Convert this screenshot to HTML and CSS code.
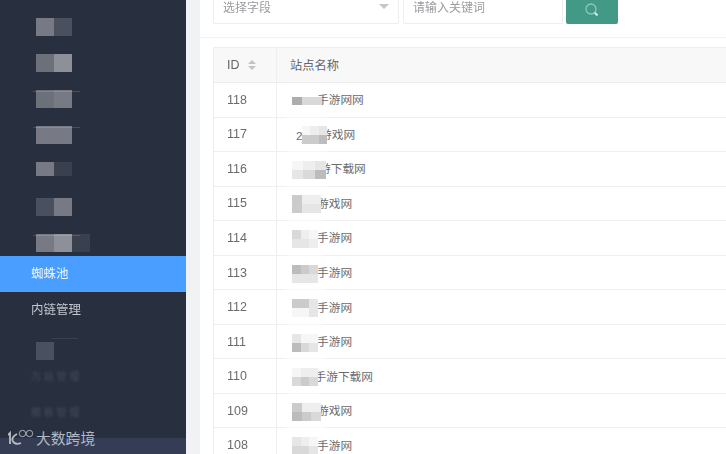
FILE: index.html
```html
<!DOCTYPE html>
<html lang="zh">
<head>
<meta charset="utf-8">
<title>蜘蛛池</title>
<link rel="stylesheet" href="styles.css">
</head>
<body>
<div class="app">
  <aside class="sidebar">
    <ul class="menu">
      <li class="item"><span class="mosaic"><i class="g1"></i><i class="g3"></i></span></li>
      <li class="item"><span class="mosaic"><i class="g2"></i><i class="g0"></i></span></li>
      <li class="item"><span class="mosaic streak"><i class="g2"></i><i class="g1"></i></span></li>
      <li class="item"><span class="mosaic streak"><i class="g1"></i><i class="g1"></i></span></li>
      <li class="item"><span class="mosaic short"><i class="g1"></i><i class="g4"></i></span></li>
      <li class="item"><span class="mosaic"><i class="g3"></i><i class="g1"></i></span></li>
      <li class="item"><span class="mosaic streak"><i class="g1"></i><i class="g0"></i><i class="g4"></i></span></li>
      <li class="item active"><span class="label">蜘蛛池</span></li>
      <li class="item"><span class="label">内链管理</span></li>
      <li class="item"><span class="mosaic streak dim"><i class="g3"></i></span></li>
      <li class="item faint"><span class="label">万 站 管 理</span></li>
      <li class="item faint"><span class="label">模 板 管 理</span></li>
    </ul>
    <div class="footer-bar"></div>
    <div class="watermark">
      <svg class="wm-logo" viewBox="0 0 28 18" width="28" height="18" aria-hidden="true">
        <path d="M0 6 2 4V15" fill="none" stroke="#b9bdc5" stroke-width="1.8"/>
        <path d="M9 5Q3.5 8 4.5 11.5 6.500 16.500 13 14" fill="none" stroke="#b9bdc5" stroke-width="1.8"/>
        <circle cx="14.500" cy="4.500" r="3.200" fill="none" stroke="#b9bdc5" stroke-width="0.900"/>
        <circle cx="21.500" cy="4.500" r="3.200" fill="none" stroke="#b9bdc5" stroke-width="0.900"/>
      </svg>
      <span class="wm-text">大数跨境</span>
    </div>
  </aside>
  <div class="gutter"></div>
  <main class="content">
    <div class="filters">
      <div class="select"><span>选择字段</span><b class="caret"></b></div>
      <div class="input">请输入关键词</div>
      <div class="btn">
        <svg viewBox="0 0 16 16" width="16" height="16" aria-hidden="true">
          <circle cx="7" cy="7" r="5" fill="none" stroke="#8fc7b8" stroke-width="1.300"/>
          <path d="M10.800 10.800 13.500 13.500" stroke="#d8ece6" stroke-width="2"/>
        </svg>
      </div>
    </div>
    <div class="table">
      <div class="row head">
        <div class="c-id">ID<span class="sort"><b class="up"></b><b class="down"></b></span></div>
        <div class="c-name">站点名称</div>
      </div>
      <div class="row"><div class="c-id">118</div><div class="c-name"><span class="blur t25"><span class="cells thin wide30"><i class="c6"></i><i class="c3"></i><i class="c3"></i></span></span>手游网网</div></div>
      <div class="row"><div class="c-id">117</div><div class="c-name"><span class="blur t28"><span class="two">2</span><span class="cells wide25"><i class="c0"></i><i class="c1"></i><i class="c2"></i><i class="c4"></i><i class="c4"></i><i class="c5"></i></span></span>游戏网</div></div>
      <div class="row"><div class="c-id">116</div><div class="c-name"><span class="blur t27"><span class="cells wide34"><i class="c0"></i><i class="c1"></i><i class="c2"></i><i class="c2"></i><i class="c3"></i><i class="c5"></i></span></span>游下载网</div></div>
      <div class="row"><div class="c-id">115</div><div class="c-name"><span class="blur t25"><span class="cells wide29"><i class="c4"></i><i class="c1"></i><i class="c1"></i><i class="c4"></i><i class="c2"></i><i class="c2"></i></span></span>游戏网</div></div>
      <div class="row"><div class="c-id">114</div><div class="c-name"><span class="blur t25"><span class="cells wide26"><i class="c3"></i><i class="c1"></i><i class="c0"></i><i class="c2"></i><i class="c2"></i><i class="c1"></i></span></span>手游网</div></div>
      <div class="row"><div class="c-id">113</div><div class="c-name"><span class="blur t25"><span class="cells wide26"><i class="c5"></i><i class="c4"></i><i class="c3"></i><i class="c2"></i><i class="c2"></i><i class="c2"></i></span></span>手游网</div></div>
      <div class="row"><div class="c-id">112</div><div class="c-name"><span class="blur t25"><span class="cells wide26"><i class="c4"></i><i class="c4"></i><i class="c2"></i><i class="c0"></i><i class="c0"></i><i class="c2"></i></span></span>手游网</div></div>
      <div class="row"><div class="c-id">111</div><div class="c-name"><span class="blur t25"><span class="cells wide26"><i class="c2"></i><i class="c0"></i><i class="c0"></i><i class="c5"></i><i class="c3"></i><i class="c2"></i></span></span>手游网</div></div>
      <div class="row"><div class="c-id">110</div><div class="c-name"><span class="blur t22"><span class="cells wide26"><i class="c0"></i><i class="c1"></i><i class="c1"></i><i class="c3"></i><i class="c4"></i><i class="c3"></i></span></span>手游下载网</div></div>
      <div class="row"><div class="c-id">109</div><div class="c-name"><span class="blur t25"><span class="cells wide29"><i class="c4"></i><i class="c1"></i><i class="c1"></i><i class="c5"></i><i class="c4"></i><i class="c3"></i></span></span>游戏网</div></div>
      <div class="row"><div class="c-id">108</div><div class="c-name"><span class="blur t25"><span class="cells wide26"><i class="c2"></i><i class="c1"></i><i class="c0"></i><i class="c3"></i><i class="c3"></i><i class="c2"></i></span></span>手游网</div></div>
    </div>
  </main>
</div>
</body>
</html>
```
FILE: styles.css
```css
* { box-sizing: border-box; }
html, body { margin: 0; height: 100%; overflow: hidden; }
body {
  font-family: "Liberation Sans", "Noto Sans CJK SC", sans-serif;
  font-size: 12px;
  color: #696b6f;
  background: #fff;
}
.app { display: flex; height: 454px; }

/* sidebar */
.sidebar {
  position: relative;
  flex: 0 0 186px;
  background: #283040;
  overflow: hidden;
}
.menu { list-style: none; margin: 0; padding: 4px 0 0; }
.item {
  display: flex;
  align-items: center;
  height: 36px;
  padding-left: 31px;
  color: #c3c6cb;
  font-size: 12.5px;
}
.label { display: block; margin-bottom: 3px; filter: blur(0.25px); }
.item.active { background: #4a9eff; color: #f2f7fd; }
.item.faint { color: #454b5a; font-size: 10px; }
.item.faint .label { margin-bottom: 14px; filter: blur(0.9px); }
.mosaic { position: relative; display: flex; margin: 10px 0 0 5px; }
.mosaic i { display: block; width: 18px; height: 18px; }
.mosaic.short i { height: 14px; }
.mosaic.short { margin-bottom: 4px; }
.streak::before {
  content: "";
  position: absolute;
  left: -3px;
  top: 1px;
  width: 47px;
  height: 1px;
  background: rgba(255, 255, 255, 0.14);
  filter: blur(0.5px);
}
.streak.dim::before { top: -4px; left: 16px; width: 26px; background: rgba(255, 255, 255, 0.08); }
.g0 { background: #8d8f99; }
.g1 { background: #777a85; }
.g2 { background: #6c7079; }
.g3 { background: #4a505d; }
.g4 { background: #3a404e; }
.footer-bar {
  position: absolute;
  left: 0; right: 0; bottom: 0;
  height: 16px;
  background: #343d53;
}
.watermark {
  position: absolute;
  left: 8px;
  bottom: 6px;
  display: flex;
  align-items: center;
}
.wm-text { color: #b4b8c0; font-size: 14.800px; }

.gutter { flex: 0 0 14px; background: #f1f2f4; }

/* content */
.content { flex: 1; min-width: 0; overflow: hidden; }
.filters {
  display: flex;
  height: 38px;
  padding-left: 13px;
  border-bottom: 1px solid #f3f3f3;
}
.select, .input {
  display: flex;
  align-items: center;
  height: 24px;
  border: 1px solid #eeeeee;
  border-top: 0;
  border-radius: 0 0 2px 2px;
  color: #9a9c9f;
  font-size: 12px;
  padding: 0 0 10px 9px;
  filter: blur(0.3px);
}
.select { width: 186px; justify-content: space-between; padding-right: 9px; }
.input { width: 160px; margin-left: 4px; }
.caret {
  width: 0; height: 0;
  border-left: 5px solid transparent;
  border-right: 5px solid transparent;
  border-top: 5px solid #c4c6c9;
}
.btn {
  display: flex;
  align-items: center;
  justify-content: center;
  width: 52px;
  height: 24px;
  margin-left: 3px;
  padding-bottom: 5px;
  background: #429a86;
  border-radius: 0 0 2px 2px;
}
.table {
  margin: 9px 0 0 13px;
  border-left: 1px solid #eeeeee;
  border-top: 1px solid #eeeeee;
}
.row {
  display: flex;
  align-items: center;
  height: 34.55px;
  border-bottom: 1px solid #efefef;
}
.row.head { height: 35px; background: #f8f8f9; border-bottom-color: #ececec; color: #62656a; }
.row.head .c-name { padding: 0 0 0 13px; font-size: 12.25px; }
.c-id {
  display: flex;
  align-items: center;
  align-self: stretch;
  flex: 0 0 63px;
  padding-left: 13px;
  border-right: 1px solid #eeeeee;
  font-size: 12.5px;
  filter: blur(0.25px);
}
.c-name {
  display: flex;
  align-items: center;
  padding: 0 0 2px 15px;
  font-size: 11.7px;
}
.sort { display: flex; flex-direction: column; gap: 2px; margin-left: 8px; }
.sort b { width: 0; height: 0; border-left: 4.500px solid transparent; border-right: 4.500px solid transparent; }
.sort .up { border-bottom: 4px solid #c2c4c7; }
.sort .down { border-top: 4px solid #c2c4c7; }

/* pixelated names: the white halo lies under the text, the cells over it */
.blur {
  display: flex;
  align-items: center;
  flex: none;
  height: 18px;
  margin-top: 4px;
  box-shadow: 0 0 3px 7px #fff;
}
.t22 { width: 22.500px; }
.t25 { width: 25px; }
.t27 { width: 27px; }
.t28 { width: 28px; }
.two { flex: none; width: 10px; padding-left: 4px; }
.cells {
  position: relative;
  z-index: 1;
  flex: none;
  display: grid;
  grid-template-columns: repeat(3, 1fr);
  grid-auto-rows: 9px;
}
.cells.thin { grid-auto-rows: 8px; }
.wide25 { width: 25px; }
.wide26 { width: 26px; }
.wide29 { width: 29px; }
.wide30 { width: 30px; }
.wide34 { width: 34px; }
.cells i { display: block; }
.c0 { background: #f6f6f6; }
.c1 { background: #eeeeee; }
.c2 { background: #e6e6e6; }
.c3 { background: #d9d9d9; }
.c4 { background: #cbcbcb; }
.c5 { background: #bcbcbc; }
.c6 { background: #adadad; }
```
